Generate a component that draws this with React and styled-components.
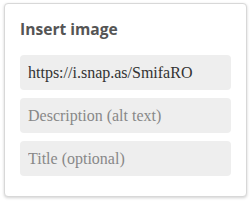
import React from "react";
import styled, { createGlobalStyle } from "styled-components";

const Global = createGlobalStyle`
  html, body { margin: 0; padding: 0; background: #fff; }
  body { width: 251px; height: 201px; overflow: hidden; }
`;

const Page = styled.div`
  padding: 3px 0 0 4px;
`;

const Popup = styled.div`
  box-sizing: border-box;
  width: 243px;
  height: 194px;
  background: #fff;
  border: 1px solid #d8d8d8;
  border-radius: 4px;
  box-shadow: 0 1px 3px rgba(0, 0, 0, 0.18);
  padding: 15px 15px 0 15px;
  display: flex;
  flex-direction: column;
`;

const Title = styled.h3`
  margin: 0 0 16px 0;
  font-family: "Open Sans", sans-serif;
  font-weight: 700;
  font-size: 15.6px;
  line-height: 20px;
  color: #555;
`;

const Fields = styled.div`
  display: flex;
  flex-direction: column;
  gap: 8px;
`;

const Input = styled.input`
  box-sizing: border-box;
  width: 211px;
  height: 35px;
  border: none;
  outline: none;
  border-radius: 4px;
  background: #eee;
  padding: 0 8px;
  font-family: "Liberation Serif", serif;
  font-size: 16px;
  color: #333;
  &::placeholder { color: #888; }
`;

export default function App() {
  return (
    <>
      <Global />
      <Page>
        <Popup>
          <Title>Insert image</Title>
          <Fields>
            <Input defaultValue="https://i.snap.as/SmifaRO" readOnly />
            <Input placeholder="Description (alt text)" />
            <Input placeholder="Title (optional)" />
          </Fields>
        </Popup>
      </Page>
    </>
  );
}
